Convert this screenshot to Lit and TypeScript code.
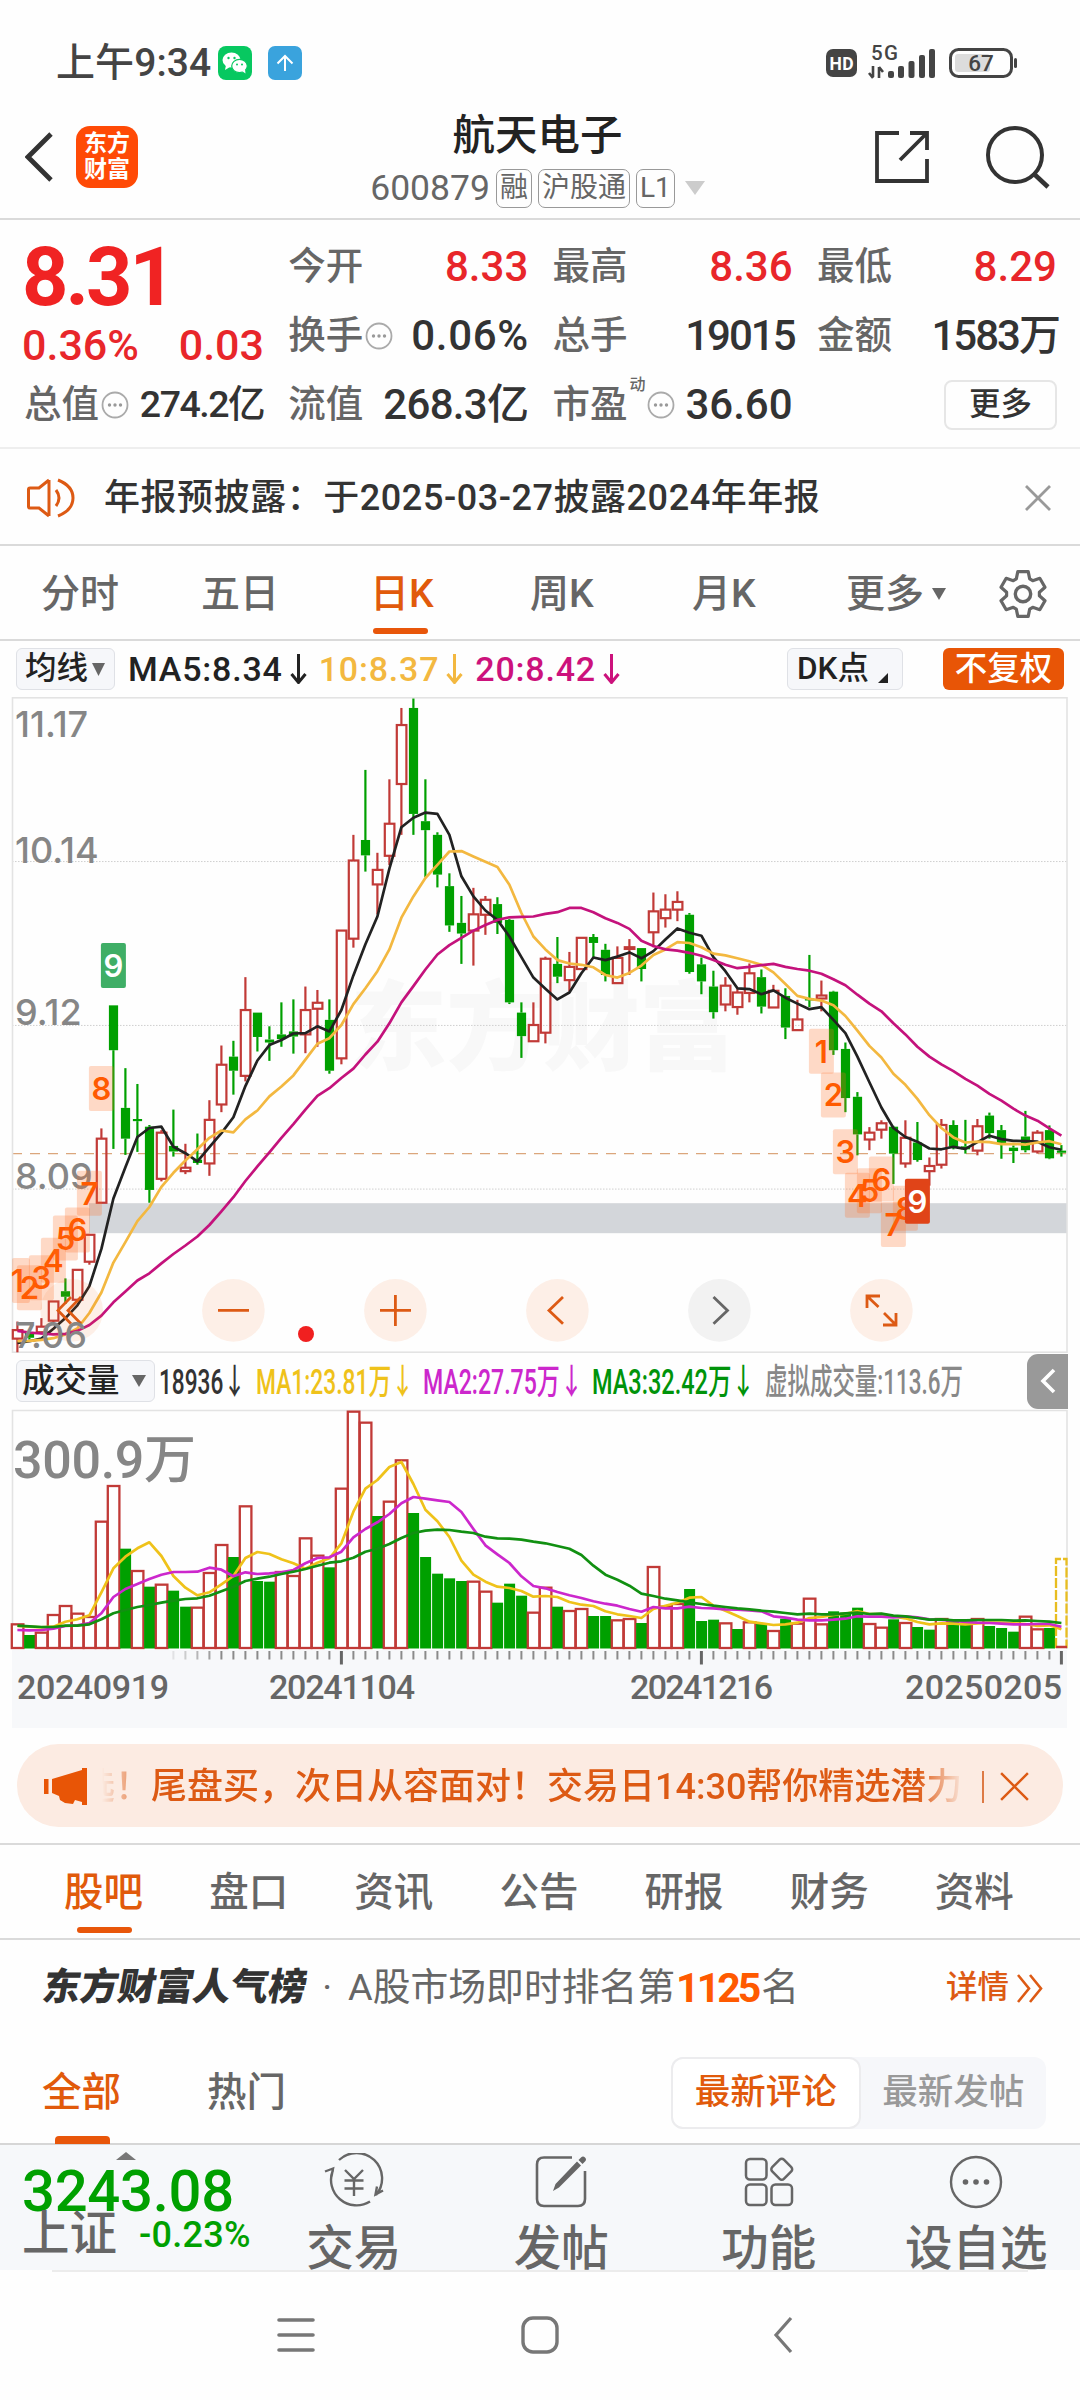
import { LitElement, html, css, svg } from "lit";
import { customElement, property } from "lit/decorators.js";

// [isUp, high, bodyTop, bodyBottom, low] in chart levels, measured downwards
type Candle = [number, number, number, number, number];
const CANDLES: Candle[] = [
  [1,1478,1498,1518,1550],[0,1502,1504,1516,1520],[1,1470,1490,1503,1508],[1,1431,1431,1476,1480],
  [0,1377,1407,1420,1437],[1,1357,1357,1427,1430],[1,1275,1275,1338,1345],[1,1026,1050,1200,1200],
  [0,738,738,843,1074],[0,885,978,1050,1088],[0,922,1004,1009,1081],[0,1018,1022,1170,1200],
  [1,1030,1036,1144,1150],[0,982,1067,1080,1092],[1,1062,1118,1126,1133],[0,1038,1099,1107,1111],
  [1,960,1006,1108,1137],[1,832,877,970,988],[0,821,858,891,947],[1,672,749,903,916],
  [0,755,755,812,846],[0,787,818,825,868],[0,731,806,817,835],[0,724,799,811,851],
  [1,694,749,806,850],[1,702,732,746,835],[0,724,772,891,898],[1,563,563,862,876],
  [1,339,399,582,603],[0,187,351,387,425],[1,381,421,455,525],[1,209,313,388,410],
  [1,42,82,220,339],[0,20,42,290,339],[0,209,307,328,438],[0,333,339,432,462],
  [0,429,459,551,566],[0,482,545,570,641],[1,463,525,563,645],[1,482,491,526,573],
  [0,485,501,545,571],[0,536,538,731,735],[0,731,755,810,861],[1,731,784,822,822],
  [1,624,629,802,827],[0,578,641,671,686],[1,613,648,679,705],[1,580,580,653,653],
  [0,571,578,592,628],[0,594,608,667,682],[1,600,627,686,686],[1,583,602,606,667],
  [0,604,604,653,682],[1,474,518,567,602],[1,478,514,534,556],[1,471,496,514,541],
  [0,522,526,660,664],[0,626,642,682,712],[0,657,694,754,769],[1,672,692,736,752],
  [1,700,708,742,760],[1,640,663,709,731],[0,654,672,741,757],[1,690,704,743,743],
  [0,698,716,790,817],[1,725,771,796,796],[0,620,722,726,742],[1,680,715,722,752],
  [0,704,706,843,854],[0,825,840,955,988],[0,941,952,1040,1089],[1,1023,1036,1052,1077],
  [1,1007,1014,1029,1050],[0,1020,1022,1085,1156],[1,1007,1048,1108,1118],[0,1011,1059,1100,1104],
  [1,1094,1114,1126,1160],[1,1004,1018,1111,1120],[0,1007,1018,1069,1075],[0,1006,1068,1075,1085],
  [1,1004,1021,1078,1089],[0,989,996,1037,1050],[0,1018,1030,1063,1097],[0,1066,1071,1079,1107],
  [0,985,1045,1077,1082],[1,1030,1036,1080,1085],[0,1019,1030,1096,1098],[0,1065,1078,1083,1092],
];
const MA5 = [1528,1524,1518,1495,1470,1440,1395,1308,1190,1117,1046,1025,1022,1069,1084,1103,1070,1037,1000,927,867,831,819,804,803,787,799,749,668,595,530,418,321,299,287,290,339,436,483,516,538,577,625,673,699,724,708,663,626,632,624,614,628,611,584,558,568,575,625,658,698,700,712,703,720,734,747,742,772,803,858,918,977,1025,1046,1057,1073,1075,1069,1074,1058,1043,1051,1055,1056,1057,1070,1076];
const MA10 = [1524,1523,1521,1517,1508,1494,1458,1410,1340,1292,1243,1210,1163,1130,1101,1075,1048,1031,1035,1005,984,951,928,902,865,828,815,784,735,698,658,607,533,483,440,409,378,377,390,402,414,456,522,577,607,632,640,643,649,667,673,662,645,620,607,590,592,602,617,621,628,635,643,661,688,716,723,727,738,763,797,833,860,898,924,957,995,1025,1047,1059,1057,1058,1063,1062,1064,1059,1056,1063];
const MA20 = [1500,1504,1506,1508,1507,1500,1486,1464,1433,1408,1382,1365,1342,1320,1300,1279,1252,1220,1187,1149,1115,1082,1048,1016,982,950,932,908,886,853,823,780,731,693,654,619,597,580,563,550,538,532,531,530,524,520,510,510,520,534,545,559,587,599,607,610,615,622,632,643,651,648,644,641,648,653,657,664,677,691,713,734,752,780,806,835,858,876,892,910,926,945,961,980,996,1008,1026,1043];

const VOLUMES = [850,885,875,822,795,818,828,542,435,626,690,740,731,752,800,800,696,612,651,496,723,725,693,705,592,644,682,443,212,245,528,482,358,519,651,701,715,723,722,752,788,731,767,815,740,800,810,804,828,828,838,834,849,678,797,789,747,843,839,847,867,844,851,870,836,848,773,850,814,818,803,849,860,838,846,861,869,834,845,850,834,858,864,875,827,865,864];
const VOL_UP = new Set([0,2,3,4,5,6,7,8,10,12,15,16,17,19,22,23,24,25,27,28,29,31,32,38,39,43,44,46,47,50,51,53,54,55,59,61,63,65,66,67,71,72,74,77,80,84,85]);
const VMA1 = [858,860,862,860,845,838,826,757,685,650,625,607,648,708,743,766,757,733,708,654,636,642,658,670,686,668,655,610,515,446,420,381,366,432,509,544,591,662,704,725,740,744,753,770,768,771,786,794,798,814,823,828,834,807,797,788,773,771,797,812,828,845,850,855,853,848,834,831,825,821,813,822,822,829,835,846,853,850,851,853,850,848,848,850,852,858,856,868];
const VMA2 = [870,871,870,866,858,856,849,820,771,747,732,717,704,696,696,695,683,689,709,697,702,700,697,690,670,654,652,635,592,567,547,522,490,471,476,481,486,516,567,616,643,669,709,738,745,756,766,774,784,791,797,807,815,801,805,805,800,804,805,808,809,811,814,829,833,839,841,841,839,836,829,830,830,832,829,832,838,840,843,846,848,849,851,853,853,852,852,860];
const VMA3 = [857,859,861,861,857,857,853,838,820,810,801,795,788,782,777,775,767,754,740,723,716,710,702,695,687,677,668,664,653,635,626,612,594,579,572,569,570,575,579,590,595,596,599,605,610,618,626,645,677,704,719,737,761,768,776,781,787,792,797,801,805,808,812,815,819,823,821,823,823,820,818,822,821,827,829,834,839,838,841,841,840,840,840,842,841,843,845,849];

// [digit, candle index, top level, kind]
const MARKS: [string, number, number, string][] = [
  ["1",0,1329,""],["2",1,1346,""],["3",2,1323,""],["4",3,1282,""],["5",4,1230,""],["6",5,1211,""],
  ["7",6,1125,""],["8",7,880,""],["9",8,592,"buy"],
  ["1",67,793,""],["2",68,895,""],["3",69,1028,""],["4",70,1130,""],["5",71,1119,""],["6",72,1092,""],
  ["7",73,1198,""],["8",74,1160,""],["9",75,1144,"sell"],
];

const RED = "#c13a37";
const GREEN = "#00a000";
const cx = (i: number) => 17.4 + 12 * i;
const py = (v: number) => v / 2.3403 - 7;
const vy = (v: number) => v / 3 - 69;
const line = (d: number[], f: (v: number) => number) =>
  d.map((v, i) => `${cx(i).toFixed(1)},${f(v).toFixed(1)}`).join(" ");

@customElement("price-chart")
export class PriceChart extends LitElement {
  static styles = css`
    :host { display: block; height: 656px; }
    svg { display: block; }
    .axis { font: 500 36px Inter, sans-serif; fill: #868686; }
    .mark { font: 600 31px Inter, sans-serif; fill: #ff5a00; text-anchor: middle; }
    .mark.on { fill: #fff; }
    .wm { font: 900 97px "Noto Sans CJK SC", sans-serif; fill: #f8f8f8; }
  `;
  render() {
    return html`<svg width="1080" height="656" viewBox="0 0 1080 656">
      <text class="wm" x="350" y="365" textLength="386">东方财富</text>
      <rect x="89" y=${py(1201)} width="978" height="30" fill="#d3d6da" />
      ${[401.5, 785, 1168].map((v) => svg`<line x1="12" x2="1067" y1=${py(v)} y2=${py(v)} stroke="#cfcfcf" stroke-dasharray="1.5 1.5" />`)}
      <line x1="12" x2="1067" y1=${py(1085)} y2=${py(1085)} stroke="#dba67c" stroke-width="1.4" stroke-dasharray="10 8" />
      <rect x="12.5" y="0.8" width="1054.5" height="654.4" fill="none" stroke="#e3e3e3" stroke-width="1.6" />
      ${CANDLES.map(([up, h, t, b, l], i) => {
        const x = cx(i), c = up ? RED : GREEN;
        return svg`
          <line x1=${x} x2=${x} y1=${py(h)} y2=${py(t)} stroke=${c} stroke-width="2.2" />
          <line x1=${x} x2=${x} y1=${py(b)} y2=${py(l)} stroke=${c} stroke-width="2.2" />
          ${up
            ? svg`<rect x=${x - 4.6} y=${py(t)} width="9.6" height=${Math.max(0.6, (b - t) / 2.34)} fill="none" stroke=${RED} stroke-width="2.2" />`
            : svg`<rect x=${x - 4.5} y=${py(t)} width="9.2" height=${Math.max(2, (b - t) / 2.34)} fill=${GREEN} />`}`;
      })}
      ${[[MA5, "#222"], [MA10, "#f3b840"], [MA20, "#c4127c"]].map(
        ([d, c]) => svg`<polyline points=${line(d as number[], py)} fill="none" stroke=${c} stroke-width="2.7" stroke-linejoin="round" />`)}
      ${[71.7, 233.4, 395.4, 557.4, 719.4, 881.4].map(
        (x, i) => svg`<circle cx=${x} cy="613.4" r="31.3" fill=${i === 4 ? "#f2f2f2" : "#fa6a1c"} fill-opacity=${i === 4 ? 1 : 0.1} />`)}
      <g fill="none" stroke="#dd5a14" stroke-width="2.8">
        <path d="M218 613.4h31M380 613.4h31M395.4 598v31M563 600l-14 13.4 14 13.4" />
        <path d="M867 611V599h13M868 600l10.500 10M883 628h13v-12M884 616l11 11" />
        <path d="M71 600l-13 13.400 13 13.400M81 600l-13 13.400 13 13.400" />
      </g>
      <path d="M713.500 600l14 13.400-14 13.400" fill="none" stroke="#666" stroke-width="2.800" />
      <circle cx="306" cy="637" r="8" fill="#f02020" />
      ${[["11.17", 110], ["10.14", 404], ["9.12", 785], ["8.09", 1168], ["7.06", 1541]].map(
        ([t, v]) => svg`<text class="axis" x="15" y=${py(v as number)}>${t}</text>`)}
      ${MARKS.map(([n, i, t, k]) => {
        const x = Math.max(12, cx(i) - 12.5), w = cx(i) + 12.5 - x;
        return svg`<rect x=${x} y=${py(t)} width=${w} height="45" rx="2"
            fill=${k === "buy" ? "#3fae66" : k === "sell" ? "#e04418" : "#ff6a20"} fill-opacity=${k ? 1 : 0.25} />
          <text class="mark ${k ? "on" : ""}" x=${cx(i)} y=${py(t) + 34}>${n}</text>`;
      })}
    </svg>`;
  }
}

@customElement("volume-chart")
export class VolumeChart extends LitElement {
  static styles = css`
    :host { display: block; height: 319px; }
    svg { display: block; }
    .max { font: 500 52px Roboto, "Noto Sans CJK SC", sans-serif; fill: #868686; }
    .date { font: 500 34px Roboto, sans-serif; fill: #666; }
  `;
  render() {
    return html`<svg width="1080" height="319" viewBox="0 0 1080 319">
      <path d="M12.500 240V1.500H1067V240" fill="none" stroke="#e3e3e3" stroke-width="1.600" />
      <rect x="12" y="241" width="1055" height="78" fill="#f7f8fa" />
      ${VOLUMES.map((v, i) => VOL_UP.has(i)
        ? svg`<rect x=${cx(i) - 5.6} y=${vy(v) + 1} width="11.600" height=${239 - vy(v) - 1} fill="#fff" stroke=${RED} stroke-width="2.300" />`
        : svg`<rect x=${cx(i) - 5.3} y=${vy(v)} width="11" height=${239.5 - vy(v)} fill=${GREEN} />`)}
      <path d="M1056 239V150h10.500V239" fill="none" stroke="#e8bd20" stroke-width="2.300" stroke-dasharray="10 2" />
      <path d="M1056 238h11" stroke=${RED} stroke-width="2.500" />
      ${[[VMA1, "#efc21a"], [VMA2, "#cc27cc"], [VMA3, "#119011"]].map(
        ([d, c]) => svg`<polyline points=${line(d as number[], vy)} fill="none" stroke=${c} stroke-width="2.700" stroke-linejoin="round" />`)}
      ${Array.from({ length: 75 }, (_, k) => k + 13).map((i) => {
        const major = i % 30 === 27;
        return svg`<line x1=${cx(i)} x2=${cx(i)} y1="242" y2=${major ? 255.5 : 250.5}
          stroke=${major ? "#666" : "#8a8a8a"} stroke-width=${major ? 3 : 2} stroke-opacity=${Math.min(1, (i - 12) / 5)} />`;
      })}
      <text class="max" x="13" y="69" textLength="183">300.9万</text>
      <text class="date" x="17" y="290" textLength="152">20240919</text>
      <text class="date" x="269" y="290" textLength="146">20241104</text>
      <text class="date" x="630" y="290" textLength="143">20241216</text>
      <text class="date" x="905" y="290" textLength="157">20250205</text>
    </svg>`;
  }
}

// A single line of text condensed to a fixed width
@customElement("fit-text")
export class FitText extends LitElement {
  @property({ type: Number }) w = 100;
  @property() text = "";
  static styles = css`
    :host { display: block; }
    svg { display: block; overflow: visible; }
    text { font: 500 35px Roboto, "Noto Sans CJK SC", sans-serif; fill: currentColor; }
  `;
  render() {
    return html`<svg width=${this.w} height="40"><text x="0" y="33" textLength=${this.w} lengthAdjust="spacingAndGlyphs">${this.text}</text></svg>`;
  }
}

// Six-toothed gear outline around (24, 24)
const gearPath = () => {
  const pts: string[] = [];
  for (let k = 0; k < 6; k++) {
    for (const [r, a] of [[16.5, -24], [23, -13], [23, 13], [16.5, 24]]) {
      const t = ((k * 60 + a - 90) * Math.PI) / 180;
      pts.push(`${(24 + r * Math.cos(t)).toFixed(1)} ${(24 + r * Math.sin(t)).toFixed(1)}`);
    }
  }
  return `M${pts.join("L")}z`;
};

const dots = html`<svg class="dots" width="28" height="28" viewBox="0 0 28 28"><circle cx="14" cy="14" r="12.500" fill="none" stroke="#aaa" stroke-width="1.800"/><g fill="#999"><circle cx="8.500" cy="14" r="1.700"/><circle cx="14" cy="14" r="1.700"/><circle cx="19.500" cy="14" r="1.700"/></g></svg>`;
const down = (w: number, h: number, c: string) =>
  html`<svg width=${w} height=${h} viewBox="0 0 10 10" preserveAspectRatio="none"><path d="M0 0h10L5 10z" fill=${c} /></svg>`;
const arrow = (c: string) =>
  html`<svg class="arr" width="17" height="30" viewBox="0 0 17 30"><path d="M8.500 0v28M1.500 20l7 8.500 7-8.500" fill="none" stroke=${c} stroke-width="3" /></svg>`;
const cross = (s: number, c: string, w: number) =>
  html`<svg width=${s} height=${s} viewBox="0 0 26 26"><path d="M1 1l24 24M25 1L1 25" stroke=${c} stroke-width=${w} /></svg>`;

@customElement("app-root")
export class AppRoot extends LitElement {
  static styles = css`
    :host { display: block; width: 1080px; height: 2400px; overflow: hidden; background: #fefefe; color: #333;
      font-family: Roboto, "Noto Sans CJK SC", sans-serif; font-weight: 500; line-height: 1; white-space: nowrap; }
    * { box-sizing: border-box; }
    svg { display: block; flex: none; }
    .row { display: flex; align-items: center; }
    .status { height: 96px; padding: 30px 63px 0 56px; color: #444; }
    .time { font-size: 39px; width: 162px; letter-spacing: 0.1px; }
    .status .blue { margin: 0 auto 0 16px; }
    .header { height: 124px; display: grid; grid-template-columns: 1fr auto 1fr; align-items: center; border-bottom: 2px solid #dadada; padding: 0 30px 0 25px; }
    .logo { width: 62px; height: 62px; border-radius: 14px; background: #ff4a06; color: #fff; font-size: 23px; font-weight: 700; line-height: 26px; padding-top: 5px; text-align: center; margin-left: 23px; }
    .title { padding-top: 9px; }
    .name { font-size: 42.500px; color: #222; text-align: center; margin-bottom: 11px; }
    .code { font-size: 35.500px; font-weight: 400; color: #666; justify-content: center; }
    .tag { border: 1.500px solid #999; border-radius: 7px; height: 39px; line-height: 36px; font-size: 28px; padding: 0 3px; margin-left: 6px; }
    .tools { justify-content: flex-end; gap: 56px; }
    .quote { height: 229px; padding: 12px 24px 9px 25px; display: grid; grid-template-columns: repeat(4, 239px); grid-template-rows: repeat(3, 69px); column-gap: 25.300px; border-bottom: 2px solid #eee; }
    .cell { display: flex; align-items: center; font-size: 42px; color: #333; }
    .cell b { font-weight: 500; margin-left: auto; }
    .cell i { font-style: normal; font-size: 37.500px; color: #666; margin-left: -1px; }
    .cell .red { color: #e8262a; }
    .wide { letter-spacing: 0.700px; margin-right: -0.700px; }
    .dots { margin-left: 2px; }
    .main { grid-row: span 2; display: flex; flex-direction: column; margin-left: -3px; }
    .price { font-size: 81px; font-weight: 700; letter-spacing: -3px; color: #f02323; margin-top: 5px; height: 84px; }
    .delta { display: flex; justify-content: space-between; font-size: 43px; color: #e8262a; margin-top: 3px; }
    .small { font-size: 37.500px; letter-spacing: -1.500px; }
    .mid { letter-spacing: -0.700px; }
    .tight { letter-spacing: -2px; margin-right: -2px; }
    .sup { font-size: 16px; align-self: flex-start; margin: 7px -1px 0 2px; color: #666; }
    .more { margin-left: auto; width: 113px; height: 50px; border: 2px solid #e6e6e6; border-radius: 8px; font-size: 31.500px; display: grid; place-items: center; }
    .notice { height: 97px; padding: 2px 29px 0 27px; border-bottom: 2px solid #dadada; }
    .notice p { margin: 0 auto 0 29px; font-size: 36px; letter-spacing: 0.550px; }
    .tabs { height: 95px; border-bottom: 2px solid #dadada; font-size: 39px; color: #666; padding: 3px 33px 0 41px; }
    .tabs span { position: relative; }
    .on { color: #e15a0b; }
    .on::after { content: ""; position: absolute; left: 3px; width: 55px; height: 6px; border-radius: 3px; background: #e8560a; top: calc(100% + 14px); }
    .k1 { width: 160px; } .k2 { width: 169px; } .k3 { width: 160px; }
    .k4 { width: 162px; } .k5 { width: 154px; } .k6 { width: 86px; }
    .legend { height: 56px; padding: 0 16px; font-size: 34px; color: #222; }
    .legend span { letter-spacing: 0.800px; }
    .pill { height: 42px; border: 1.500px solid #dfe1e6; background: #f6f7fa; border-radius: 6px; font-size: 31.500px; display: flex; align-items: center; color: #222; }
    .arr { margin: 0 0 0 7px; }
    .adj { background: #e85506; color: #fff; border-radius: 6px; width: 121px; height: 42px; font-size: 32.500px; display: grid; place-items: center; margin-left: 40px; }
    .vrow { height: 56px; padding-left: 16px; }
    .fold { width: 41px; height: 55px; border-radius: 11px 0 0 11px; background: #999; margin: 0 12px 0 auto; display: grid; place-items: center; }
    .banner { margin: 16px 17px; height: 83px; border-radius: 42px; background: #fcebe2; color: #dd5a14; padding: 2px 34px 0 27px; font-size: 36px; }
    .marquee { width: 862px; margin-left: 15px; overflow: hidden; padding: 6px 0; display: flex; -webkit-mask-image: linear-gradient(90deg, transparent, #000 50px, #000 815px, transparent); mask-image: linear-gradient(90deg, transparent, #000 50px, #000 815px, transparent); }
    .marquee span { margin-left: -23px; }
    .bar { width: 2px; height: 32px; background: #dd7a45; margin: 0 16px 0 18px; }
    .nav { height: 97px; border-top: 2px solid #dadada; border-bottom: 2px solid #dadada; font-size: 39.500px; color: #666; padding: 3px 0 0 64px; }
    .nav span { position: relative; width: 145.400px; }
    .nav .on::after { left: 13px; }
    .rank { height: 98px; padding: 0 37px 2px 43px; font-size: 37.800px; color: #666; font-weight: 400; }
    .brand { font-weight: 900; color: #333; transform: skewX(-10deg); letter-spacing: -0.200px; }
    .rank b { color: #ff5a00; font-weight: 700; font-size: 41px; letter-spacing: -3px; margin: 0 3px 0 1px; }
    .detail { color: #dd5a14; font-size: 31.500px; margin: 0 8px 0 auto; font-weight: 500; }
    .filter { height: 107px; padding: 4px 34px 0 42px; font-size: 39.500px; color: #666; border-bottom: 2px solid #d6d6d6; }
    .filter > span { position: relative; width: 165px; }
    .filter .on::after { left: 13px; top: calc(100% + 24px); height: 8px; border-radius: 4px 4px 0 0; }
    .seg { margin-left: auto; width: 375px; height: 72px; border-radius: 12px; background: #f6f7fa; display: flex; font-size: 35.500px; color: #999; }
    .seg div { flex: 1; display: grid; place-items: center; border-radius: 12px; }
    .seg .sel { background: #fff; border: 2px solid #ececee; color: #e15a0b; }
    .dock { height: 125px; background: #f6f8fa; overflow: hidden; display: flex; color: #666; }
    .index { width: 250px; padding: 7px 0 0 22px; }
    .index svg { margin-left: 94px; }
    .pts { font-size: 58px; color: #00a000; letter-spacing: -0.300px; line-height: 54px; margin-top: 4px; }
    .sh { font-size: 47.500px; gap: 22px; margin-top: -7px; }
    .sh em { font-style: normal; font-size: 36px; color: #00a000; letter-spacing: 0.300px; }
    .act { flex: 1; display: flex; flex-direction: column; align-items: center; padding-top: 8px; font-size: 47.500px; gap: 17px; }
    .sys { height: 130px; border-top: 2px solid #ececec; margin: 0 52px; padding: 44px 235px 0 225px; display: flex; justify-content: space-between; }
    .home { margin-right: 8px; }
  `;
  render() {
    return html`
      <div class="row status">
        <span class="time">上午9:34</span>
        <svg width="34" height="34" viewBox="0 0 34 34"><rect width="34" height="34" rx="8" fill="#07c860"/><ellipse cx="13.500" cy="14" rx="9" ry="7.500" fill="#fff"/><path d="M8 19l-1 5 5-3z" fill="#fff"/><ellipse cx="21.500" cy="20" rx="7.800" ry="6.600" fill="#fff" stroke="#07c860" stroke-width="1.200"/><path d="M24 25l3.500 2.500-.5-4z" fill="#fff"/><g fill="#07c860"><circle cx="10.500" cy="12" r="1.200"/><circle cx="16.500" cy="12" r="1.200"/><circle cx="19" cy="18.500" r="1"/><circle cx="24" cy="18.500" r="1"/></g></svg>
        <svg class="blue" width="34" height="34" viewBox="0 0 34 34"><rect width="34" height="34" rx="7" fill="#3aa3dd"/><path d="M17 25V10M9.500 17.500L17 10l7.500 7.500" fill="none" stroke="#fff" stroke-width="2"/></svg>
        <svg width="192" height="38" viewBox="0 0 192 38">
          <rect x="1" y="5" width="31" height="28" rx="7" fill="#444"/><text x="16.500" y="25.500" font-size="17.500" font-weight="700" fill="#fff" text-anchor="middle" textLength="24">HD</text>
          <text x="46" y="16" font-size="20.500" fill="#444" textLength="27">5G</text>
          <path d="M48 22v11M44 29l4 5M54 34V23M54 23l4 5" stroke="#444" stroke-width="2.600" fill="none"/>
          <g fill="#444"><rect x="63" y="27" width="6" height="7" rx="2"/><rect x="73" y="22" width="6" height="12" rx="2"/><rect x="83.500" y="17" width="6" height="17" rx="2"/><rect x="94" y="11" width="6" height="23" rx="2"/><rect x="104" y="5" width="6" height="29" rx="2"/></g>
          <rect x="125.500" y="5.500" width="61" height="27" rx="8" fill="none" stroke="#444" stroke-width="3"/><rect x="130" y="10" width="35" height="18" rx="3" fill="#dcdcdc"/><rect x="189" y="14" width="3" height="10" rx="1.500" fill="#444"/>
          <text x="156" y="27" font-size="22.500" font-weight="500" fill="#444" text-anchor="middle">67</text>
        </svg>
      </div>

      <div class="header">
        <div class="row">
          <svg width="28" height="50" viewBox="0 0 28 50"><path d="M26 2L3 25l23 23" fill="none" stroke="#333" stroke-width="4.800"/></svg>
          <div class="logo">东方<br />财富</div>
        </div>
        <div class="title">
          <div class="name">航天电子</div>
          <div class="row code">600879<span class="tag">融</span><span class="tag">沪股通</span><span class="tag">L1</span><span style="margin-left:10px">${down(20, 14, "#ccc")}</span></div>
        </div>
        <div class="row tools">
          <svg width="56" height="54" viewBox="0 0 56 54"><path d="M25 3H3v48h50V29M36 3h17v17M52 4L26 30" fill="none" stroke="#333" stroke-width="3.800"/></svg>
          <svg width="64" height="64" viewBox="0 0 64 64"><circle cx="29" cy="30" r="27" fill="none" stroke="#333" stroke-width="4"/><path d="M47 48l15 14" stroke="#333" stroke-width="4.600"/></svg>
        </div>
      </div>

      <div class="quote">
        <div class="main"><div class="price">8.31</div><div class="delta"><span>0.36%</span><span>0.03</span></div></div>
        <div class="cell"><i>今开</i><b class="red">8.33</b></div>
        <div class="cell"><i>最高</i><b class="red">8.36</b></div>
        <div class="cell"><i>最低</i><b class="red">8.29</b></div>
        <div class="cell"><i>换手</i>${dots}<b class="wide">0.06%</b></div>
        <div class="cell"><i>总手</i><b class="tight">19015</b></div>
        <div class="cell"><i>金额</i><b class="tight">1583万</b></div>
        <div class="cell"><i>总值</i>${dots}<b class="small">274.2亿</b></div>
        <div class="cell"><i>流值</i><b class="mid">268.3亿</b></div>
        <div class="cell"><i>市盈</i><span class="sup">动</span>${dots}<b>36.60</b></div>
        <div class="cell"><span class="more">更多</span></div>
      </div>

      <div class="row notice">
        <svg width="48" height="42" viewBox="0 0 48 42"><path d="M22 3v36M22 3L12 11H3q-1.500 0-1.500 1.500v17Q1.500 31 3 31h9l10 8M29 13q6 8 0 16M31 3q15 6 15 18T31 39" fill="none" stroke="#dd5a14" stroke-width="3"/></svg>
        <p>年报预披露：于2025-03-27披露2024年年报</p>
        ${cross(26, "#999", 2.8)}
      </div>

      <div class="row tabs">
        <span class="k1">分时</span><span class="k2">五日</span><span class="k3 on">日K</span><span class="k4">周K</span><span class="k5">月K</span><span class="k6">更多</span>${down(14, 12, "#666")}
        <svg style="margin-left:auto" width="48" height="48" viewBox="0 0 48 48"><path d=${gearPath()} fill="none" stroke="#666" stroke-width="3.200" stroke-linejoin="round"/><circle cx="24" cy="24" r="7.700" fill="none" stroke="#666" stroke-width="3.400"/></svg>
      </div>

      <div class="row legend">
        <div class="pill" style="width:99px;padding-left:8px;gap:4px">均线${down(13, 13, "#666")}</div>
        <span style="margin-left:13px">MA5:8.34</span>${arrow("#222")}
        <span style="color:#f3b840;margin-left:12px">10:8.37</span>${arrow("#f3b840")}
        <span style="color:#cc127c;margin-left:12px">20:8.42</span>${arrow("#cc127c")}
        <div class="pill" style="width:116px;padding-left:9px;margin-left:auto;gap:9px">DK点<svg width="10" height="10" style="align-self:flex-end;margin-bottom:6px"><path d="M10 0v10H0z" fill="#222"/></svg></div>
        <div class="adj">不复权</div>
      </div>
      <price-chart></price-chart>

      <div class="row vrow">
        <div class="pill" style="width:139px;padding-left:5px;gap:12px;font-size:32.5px">成交量${down(14, 12, "#666")}</div>
        <fit-text style="margin-left:4px" .w=${87} text="18936↓"></fit-text>
        <fit-text style="margin-left:10px;color:#efc21a" .w=${158} text="MA1:23.81万↓"></fit-text>
        <fit-text style="margin-left:9px;color:#cc27cc" .w=${160} text="MA2:27.75万↓"></fit-text>
        <fit-text style="margin-left:9px;color:#00930a" .w=${163} text="MA3:32.42万↓"></fit-text>
        <fit-text style="margin-left:10px;color:#888" .w=${198} text="虚拟成交量:113.6万"></fit-text>
        <div class="fold"><svg width="16" height="26" viewBox="0 0 16 26"><path d="M14 2L3 13l11 11" fill="none" stroke="#fff" stroke-width="3.600"/></svg></div>
      </div>
      <volume-chart></volume-chart>

      <div class="row banner">
        <svg width="43" height="37" viewBox="0 0 43 37"><path d="M0 11h4.500v15H0zM8 11L38 2V0h5v37h-5v-3l-7-2-2 4-8-1-5-3-1-4-7-3z" fill="#e85506"/></svg>
        <div class="marquee"><span>选！尾盘买，次日从容面对！交易日14:30帮你精选潜力</span></div>
        <div class="bar"></div>
        ${cross(29, "#dd5a14", 2.2)}
      </div>

      <div class="row nav">
        <span class="on">股吧</span><span>盘口</span><span>资讯</span><span>公告</span><span>研报</span><span>财务</span><span>资料</span>
      </div>

      <div class="row rank">
        <span class="brand">东方财富人气榜</span><span style="margin:0 16px">·</span>A股市场即时排名第<b>1125</b>名
        <span class="detail">详情</span>
        <svg width="26" height="29" viewBox="0 0 26 29"><path d="M1 1l11 13.500L1 28M13 1l11 13.500L13 28" fill="none" stroke="#dd5a14" stroke-width="2.600"/></svg>
      </div>

      <div class="row filter">
        <span class="on">全部</span><span>热门</span>
        <div class="seg"><div class="sel">最新评论</div><div>最新发帖</div></div>
      </div>

      <div class="dock">
        <div class="index">
          <svg width="20" height="8"><path d="M10 0L20 8H0z" fill="#777"/></svg>
          <div class="pts">3243.08</div>
          <div class="row sh">上证<em>-0.23%</em></div>
        </div>
        <div class="act">
          <svg width="60" height="56" viewBox="0 0 60 56"><g fill="none" stroke="#666" stroke-width="2.400"><path d="M15 7A25.500 25.500 0 0 1 52 42M46 48.500A25.500 25.500 0 0 1 9 17M1 18.500l8-3-1.500 8M59 37.500l-7.500 4 1.500-8"/><path d="M21 17l9 9 9-9M20.500 27.500h19M20.500 35.500h19M30 26v17"/></g></svg>交易
        </div>
        <div class="act">
          <svg width="52" height="56" viewBox="0 0 52 56"><path d="M37 4.500H9q-7 0-7 7V46q0 7 7 7h34q7 0 7-7V18" fill="none" stroke="#666" stroke-width="2.600"/><path d="M46 4.500q2-2 4 0t0 4l-2.500 2.500-4-4zM42 8.500l4 4-22 22-6 3.500 2.500-7z" fill="#666"/></svg>发帖
        </div>
        <div class="act">
          <svg width="50" height="56" viewBox="0 0 50 56"><g fill="none" stroke="#666" stroke-width="2.500"><rect x="2" y="6" width="20.500" height="20.500" rx="4"/><rect x="2" y="31.500" width="20.500" height="20.500" rx="4"/><rect x="27.500" y="31.500" width="20.500" height="20.500" rx="4"/><rect x="29.500" y="8" width="16.500" height="16.500" rx="3" transform="rotate(45 37.750 16.250)"/></g></svg>功能
        </div>
        <div class="act">
          <svg width="54" height="56" viewBox="0 0 54 56"><circle cx="27" cy="29" r="25" fill="none" stroke="#666" stroke-width="2.400"/><g fill="#666"><circle cx="16.500" cy="29" r="2.800"/><circle cx="27" cy="29" r="2.800"/><circle cx="37.500" cy="29" r="2.800"/></g></svg>设自选
        </div>
      </div>

      <div class="sys">
        <svg width="38" height="38" viewBox="0 0 38 38"><path d="M2 4h34M2 19h34M2 34h34" stroke="#777" stroke-width="3.600" stroke-linecap="round"/></svg>
        <svg class="home" width="38" height="38" viewBox="0 0 38 38"><rect x="2" y="2" width="34" height="34" rx="10" fill="none" stroke="#777" stroke-width="3.400"/></svg>
        <svg width="20" height="38" viewBox="0 0 20 38"><path d="M18 2L3 19l15 17" fill="none" stroke="#777" stroke-width="3.200"/></svg>
      </div>
    `;
  }
}
